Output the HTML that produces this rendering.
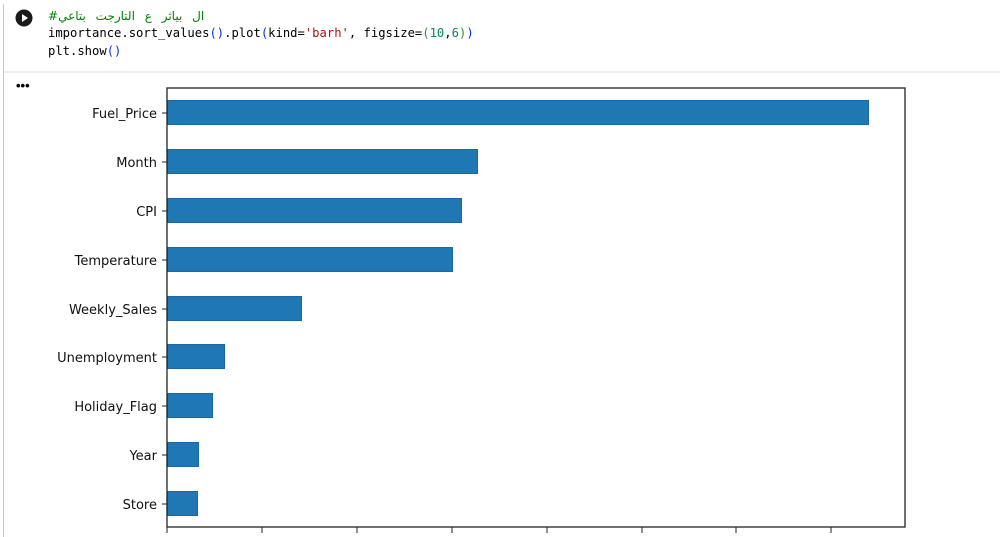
<!DOCTYPE html>
<html><head><meta charset="utf-8"><style>
html,body{margin:0;padding:0;background:#fff;width:1000px;height:537px;overflow:hidden}
.code{position:absolute;left:48px;font-family:"DejaVu Sans Mono","Liberation Mono",monospace;font-size:12.2px;white-space:pre;color:#000}
</style></head><body>
<div style="position:absolute;left:3px;top:4px;width:1px;height:533px;background:#c8c8c8"></div>
<div style="position:absolute;left:4px;top:71px;width:996px;height:2px;background:#efefef"></div>
<svg style="position:absolute;left:15px;top:9px" width="18" height="18" viewBox="0 0 18 18"><circle cx="9" cy="9" r="8.5" fill="#1a1a1a"/><path d="M7 5 L13 9 L7 13 Z" fill="#fff"/></svg>
<div class="code" style="top:9px;color:#008000;font-family:'DejaVu Sans',sans-serif;font-size:12px;letter-spacing:3px;word-spacing:6px" dir="ltr">#ال بياثر ع التارجت بتاعي</div>
<div class="code" style="top:26px">importance.sort_values<span style="color:#0431fa">()</span>.plot<span style="color:#0431fa">(</span>kind=<span style="color:#a31515">'barh'</span>, figsize=<span style="color:#319331">(</span><span style="color:#098658">10</span>,<span style="color:#098658">6</span><span style="color:#319331">)</span><span style="color:#0431fa">)</span></div>
<div class="code" style="top:44px">plt.show<span style="color:#0431fa">()</span></div>
<div style="position:absolute;left:16px;top:78px;font:bold 13px sans-serif;letter-spacing:0px">•••</div>
<svg style="position:absolute;left:0;top:0" width="1000" height="537" font-family="DejaVu Sans, sans-serif" font-size="13">
<g fill="#1f77b4" stroke="#1a66a8" stroke-width="1">
<rect x="167.5" y="100.5" width="701" height="24"/>
<rect x="167.5" y="149.5" width="310" height="24"/>
<rect x="167.5" y="198.5" width="294" height="24"/>
<rect x="167.5" y="247.5" width="285" height="24"/>
<rect x="167.5" y="296.5" width="134" height="24"/>
<rect x="167.5" y="344.5" width="57" height="24"/>
<rect x="167.5" y="393.5" width="45" height="24"/>
<rect x="167.5" y="442.5" width="31" height="24"/>
<rect x="167.5" y="491.5" width="30" height="24"/>
</g>
<rect x="167" y="88" width="738" height="439" fill="none" stroke="#222" stroke-width="1.3"/>
<g stroke="#222" stroke-width="1">
<line x1="162" y1="113" x2="167" y2="113"/><line x1="162" y1="162" x2="167" y2="162"/><line x1="162" y1="211" x2="167" y2="211"/><line x1="162" y1="260" x2="167" y2="260"/><line x1="162" y1="309" x2="167" y2="309"/><line x1="162" y1="357" x2="167" y2="357"/><line x1="162" y1="406" x2="167" y2="406"/><line x1="162" y1="455" x2="167" y2="455"/><line x1="162" y1="504" x2="167" y2="504"/>
<line x1="167" y1="527" x2="167" y2="533"/><line x1="262" y1="527" x2="262" y2="533"/><line x1="357" y1="527" x2="357" y2="533"/><line x1="452" y1="527" x2="452" y2="533"/><line x1="547" y1="527" x2="547" y2="533"/><line x1="642" y1="527" x2="642" y2="533"/><line x1="736" y1="527" x2="736" y2="533"/><line x1="831" y1="527" x2="831" y2="533"/>
</g>
<g text-anchor="end" fill="#111">
<text x="157" y="118">Fuel_Price</text>
<text x="157" y="167">Month</text>
<text x="157" y="216">CPI</text>
<text x="157" y="265">Temperature</text>
<text x="157" y="314">Weekly_Sales</text>
<text x="157" y="362">Unemployment</text>
<text x="157" y="411">Holiday_Flag</text>
<text x="157" y="460">Year</text>
<text x="157" y="509">Store</text>
</g>
</svg>
</body></html>
